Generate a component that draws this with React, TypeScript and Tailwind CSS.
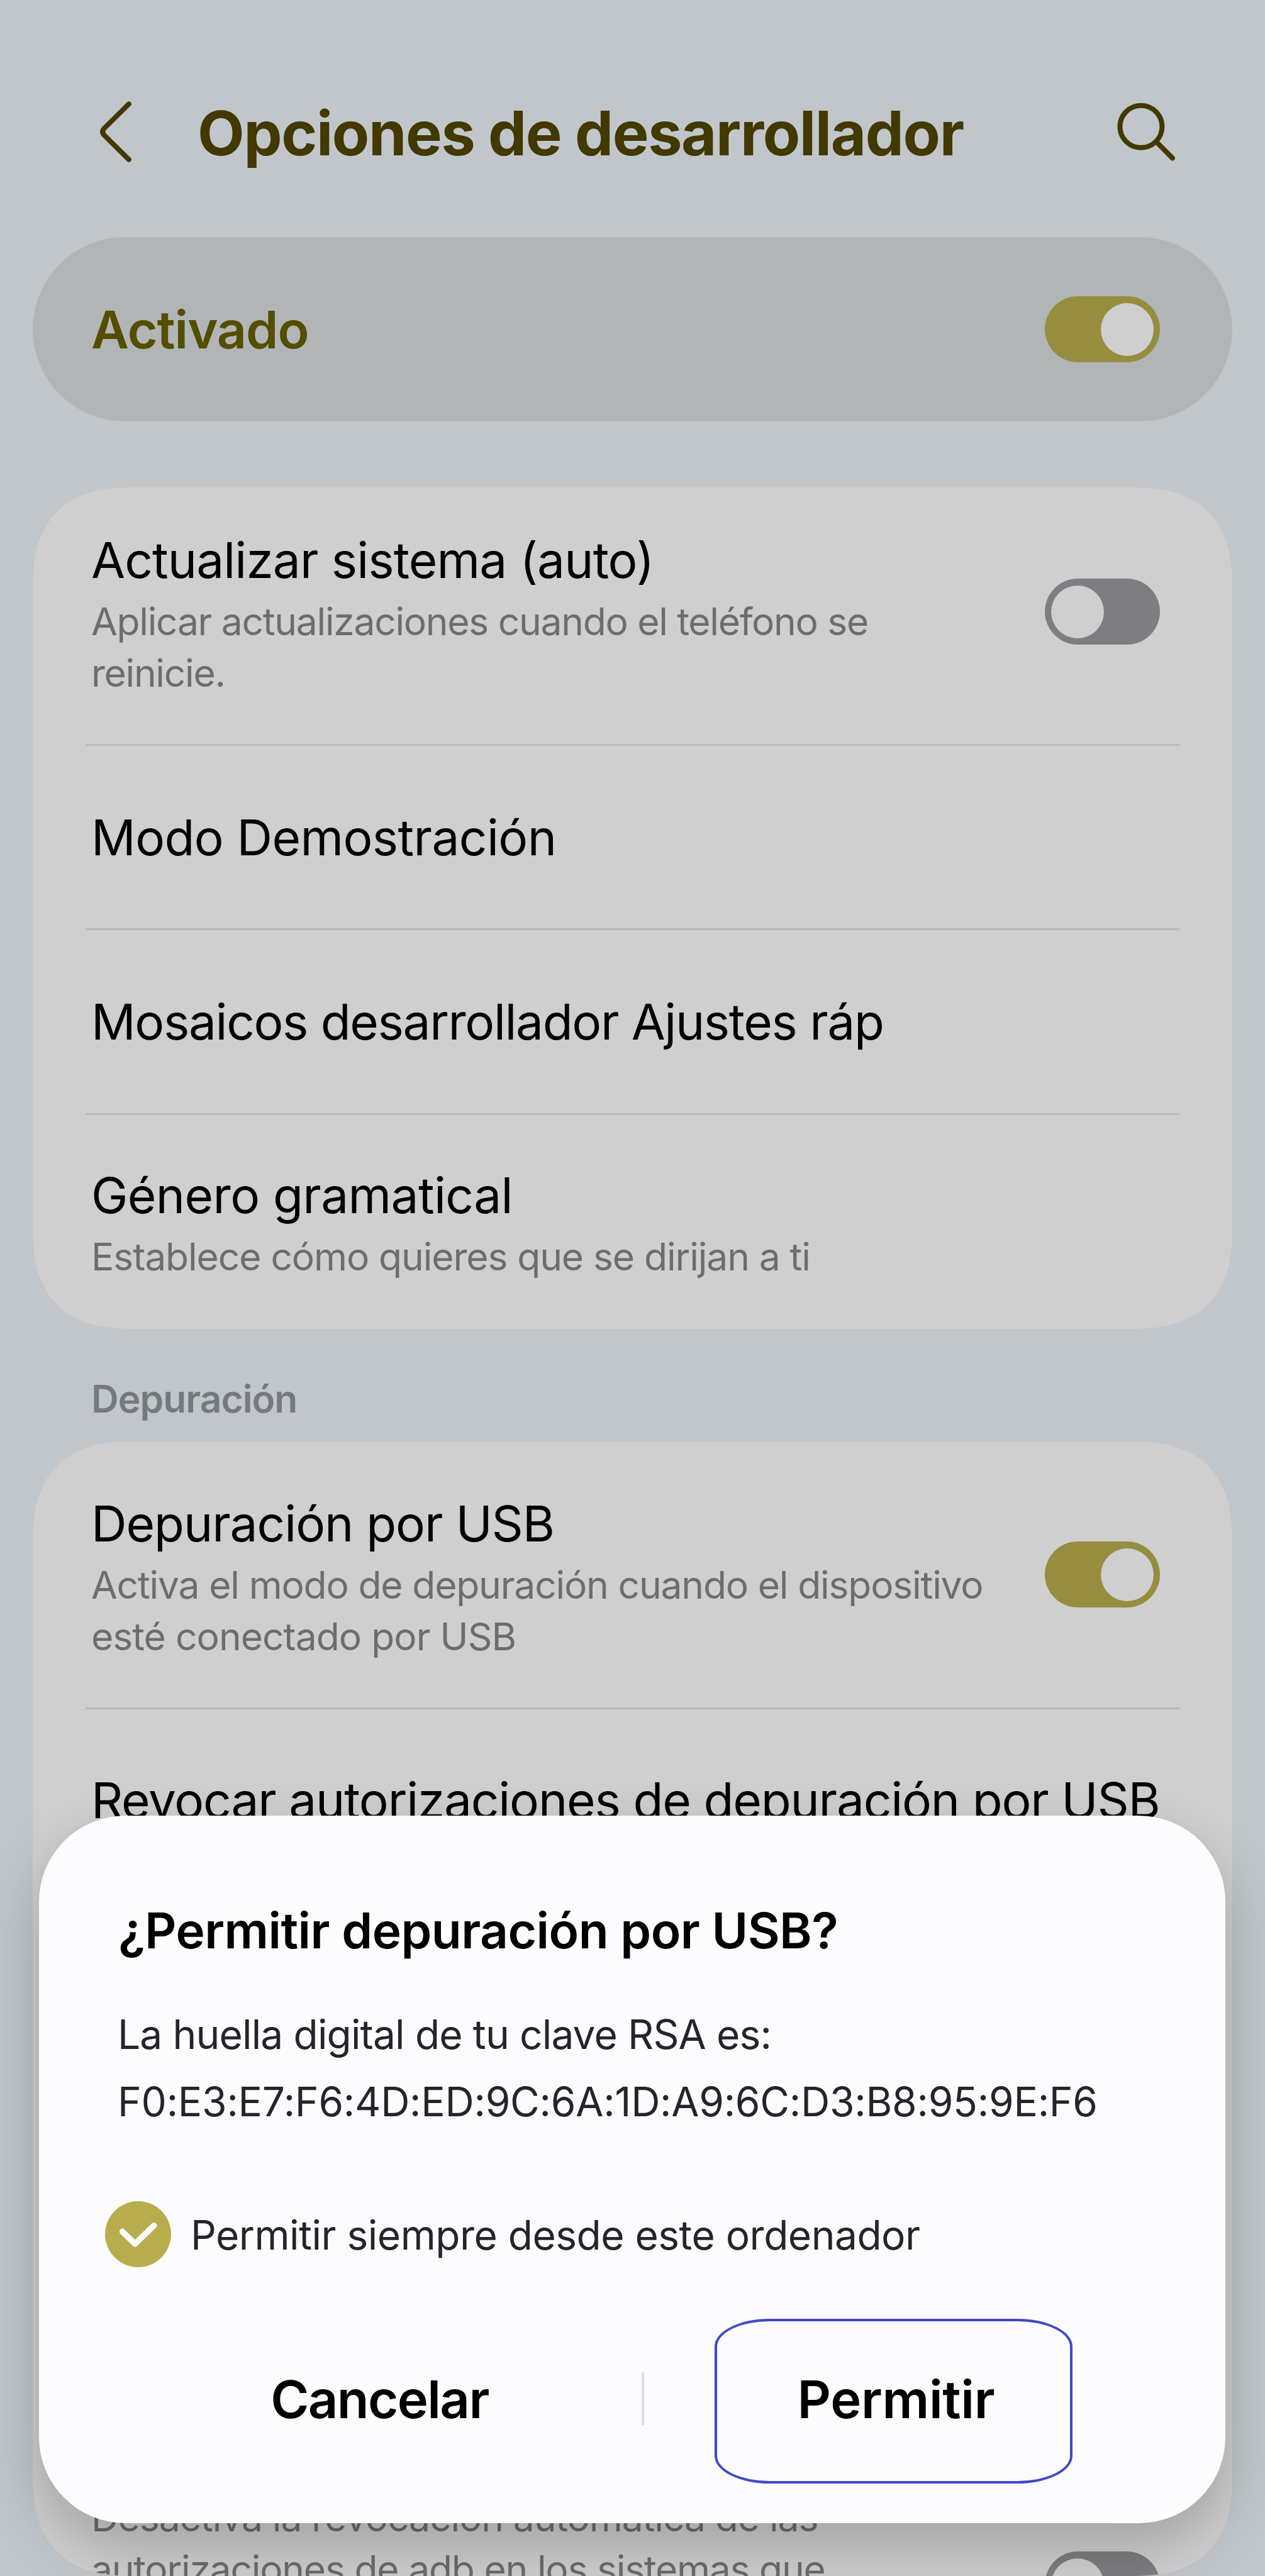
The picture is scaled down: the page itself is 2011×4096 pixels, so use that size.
import type { ReactNode } from "react";

const cardShape =
  "rounded-[133px] supports-[corner-shape:squircle]:rounded-[160px] [corner-shape:superellipse(1.32)]";

function Toggle({ on, className = "" }: { on: boolean; className?: string }) {
  return (
    <div
      role="switch"
      aria-checked={on}
      className={`flex h-[105px] w-[183px] shrink-0 items-center rounded-full px-[10px] ${
        on ? "justify-end bg-[#968d3e]" : "justify-start bg-[#7e7d81]"
      } ${className}`}
    >
      <div className="size-[84px] rounded-full bg-[#cfcfcf]" />
    </div>
  );
}

function Row({
  children,
  className = "",
  last = false,
}: {
  children: ReactNode;
  className?: string;
  last?: boolean;
}) {
  return (
    <div
      className={`mx-[84px] flex shrink-0 justify-between pl-[9px] pr-[31px] ${
        last ? "" : "border-b-[3px] border-[#bababa]"
      } ${className}`}
    >
      {children}
    </div>
  );
}

function Title({ children, className = "" }: { children: ReactNode; className?: string }) {
  return (
    <div className={`whitespace-nowrap text-[78.3px] leading-[94px] text-black ${className}`}>
      {children}
    </div>
  );
}

function Sub({ children, className = "" }: { children: ReactNode; className?: string }) {
  return (
    <div className={`whitespace-nowrap text-[60.5px] leading-[82px] text-[#6d6d6e] ${className}`}>
      {children}
    </div>
  );
}

function Header() {
  return (
    <header className="flex h-[377px] shrink-0 items-start pt-[152px] text-[#423800]">
      <svg className="ml-[150px] h-[120px] w-[70px] shrink-0" viewBox="150 152 70 120" fill="none">
        <path
          d="M204.8 165.4 L166 203.7 Q160.4 209.5 166 215.3 L204.8 253.7"
          stroke="currentColor"
          strokeWidth="8"
          strokeLinecap="round"
        />
      </svg>
      <h1 className="ml-[94px] whitespace-nowrap text-[97px] font-bold leading-[120px] tracking-[-1.35px]">
        Opciones de desarrollador
      </h1>
      <svg
        className="ml-auto mr-[131px] h-[120px] w-[120px] shrink-0"
        viewBox="1760 152 120 120"
        fill="none"
        stroke="currentColor"
        strokeWidth="7.9"
        strokeLinecap="round"
      >
        <circle cx="1813.9" cy="201.3" r="33.5" />
        <path d="M1838.5 225.8 L1863.9 251.4" />
      </svg>
    </header>
  );
}

function Dialog() {
  return (
    <div className="absolute left-[62px] top-[2887px] h-[1125px] w-[1886px] rounded-[137px] bg-[#fcfcfe] pt-[136px] shadow-[0_38px_95px_rgba(0,0,0,0.22)]">
      <h2 className="pl-[126px] text-[78.3px] font-semibold leading-[94px] tracking-[-0.52px] text-black">
        ¿Permitir depuración por USB?
      </h2>
      <div className="mt-[64px] whitespace-nowrap pl-[125px] text-[64px] leading-[107px] text-[#242528]">
        <p className="tracking-[-0.85px]">La huella digital de tu clave RSA es:</p>
        <p className="tracking-[-0.24px]">F0:E3:E7:F6:4D:ED:9C:6A:1D:A9:6C:D3:B8:95:9E:F6</p>
      </div>
      <div className="mt-[105px] flex h-[105px] items-center pl-[105px]">
        <svg className="size-[105px] shrink-0" viewBox="0 0 105 105" fill="none">
          <circle cx="52.5" cy="52.5" r="52.5" fill="#b8ad4d" />
          <path
            d="M27.6 48.3 L47.7 67.9 L77.8 38.7"
            stroke="#fcfcfe"
            strokeWidth="9.5"
            strokeLinecap="round"
            strokeLinejoin="round"
          />
        </svg>
        <span className="ml-[31px] whitespace-nowrap pt-[2px] text-[64px] leading-[105px] tracking-[-0.5px] text-[#242528]">
          Permitir siempre desde este ordenador
        </span>
      </div>
      <div className="mt-[82px] flex h-[262px] items-center text-[83px] font-semibold leading-[100px] text-black">
        <button className="w-[958px] pb-[6px] pl-[125px] text-center tracking-[-1.6px]">Cancelar</button>
        <div className="mb-[8px] h-[84px] w-[4px] bg-[#dcdcde]" />
        <button className="ml-[112px] h-[262px] w-[569px] border-[4px] border-[#4048c8] pb-[6px] pl-[8px] text-center tracking-[-0.3px] [border-radius:88px/44px]">
          Permitir
        </button>
      </div>
    </div>
  );
}

export default function App() {
  return (
    <div className="relative flex h-[4096px] w-[2011px] flex-col overflow-hidden bg-[#c0c6ca] font-['Inter','Noto_Sans',sans-serif]">
      <Header />

      <section className="mx-[52px] flex h-[293px] shrink-0 items-center justify-between rounded-full bg-[#b1b5b6] pl-[93px] pr-[115px]">
        <span className="text-[82.3px] font-semibold leading-[100px] tracking-[-1px] text-[#554d00]">
          Activado
        </span>
        <Toggle on />
      </section>

      <section className={`mx-[52px] mt-[105px] shrink-0 overflow-hidden bg-[#cfcfcf] ${cardShape}`}>
        <Row className="h-[411px]">
          <div className="pt-[69px]">
            <Title className="tracking-[-0.87px]">Actualizar sistema (auto)</Title>
            <Sub className="mt-[9px] tracking-[-1.27px]">
              Aplicar actualizaciones cuando el teléfono se
              <br />
              reinicie.
            </Sub>
          </div>
          <Toggle on={false} className="mt-[145px]" />
        </Row>
        <Row className="h-[293px] items-center pt-[2px]">
          <Title className="tracking-[-0.6px]">Modo Demostración</Title>
        </Row>
        <Row className="h-[294px] items-center pt-[1px]">
          <Title className="tracking-[-1.36px]">Mosaicos desarrollador Ajustes ráp</Title>
        </Row>
        <Row className="h-[340px]" last>
          <div className="pt-[81px]">
            <Title className="tracking-[-0.6px]">Género gramatical</Title>
            <Sub className="mt-[9px] tracking-[-1.08px]">Establece cómo quieres que se dirijan a ti</Sub>
          </div>
        </Row>
      </section>

      <h3 className="h-[179px] shrink-0 pl-[145px] pt-[70px] text-[60.5px] font-semibold leading-[82px] tracking-[-1px] text-[#757a7e]">
        Depuración
      </h3>

      <section className={`mx-[52px] flex h-[1804px] shrink-0 flex-col overflow-hidden bg-[#cfcfcf] ${cardShape}`}>
        <Row className="h-[426px]">
          <div className="pt-[84px]">
            <Title className="tracking-[-1.05px]">Depuración por USB</Title>
            <Sub className="mt-[9px] tracking-[-1.17px]">
              Activa el modo de depuración cuando el dispositivo
              <br />
              <span className="tracking-[-0.95px]">esté conectado por USB</span>
            </Sub>
          </div>
          <Toggle on className="-ml-[100px] mt-[159px]" />
        </Row>
        <Row className="h-[293px] items-center">
          <Title className="tracking-[-1.18px]">Revocar autorizaciones de depuración por USB</Title>
        </Row>
        <Row className="mt-[951px] h-[300px]" last>
          <Sub className="tracking-[-1.07px]">
            Desactiva la revocación automática de las
            <br />
            <span className="tracking-[-1.2px]">autorizaciones de adb en los sistemas que</span>
          </Sub>
          <Toggle on={false} className="mt-[95px]" />
        </Row>
      </section>

      <Dialog />
    </div>
  );
}
